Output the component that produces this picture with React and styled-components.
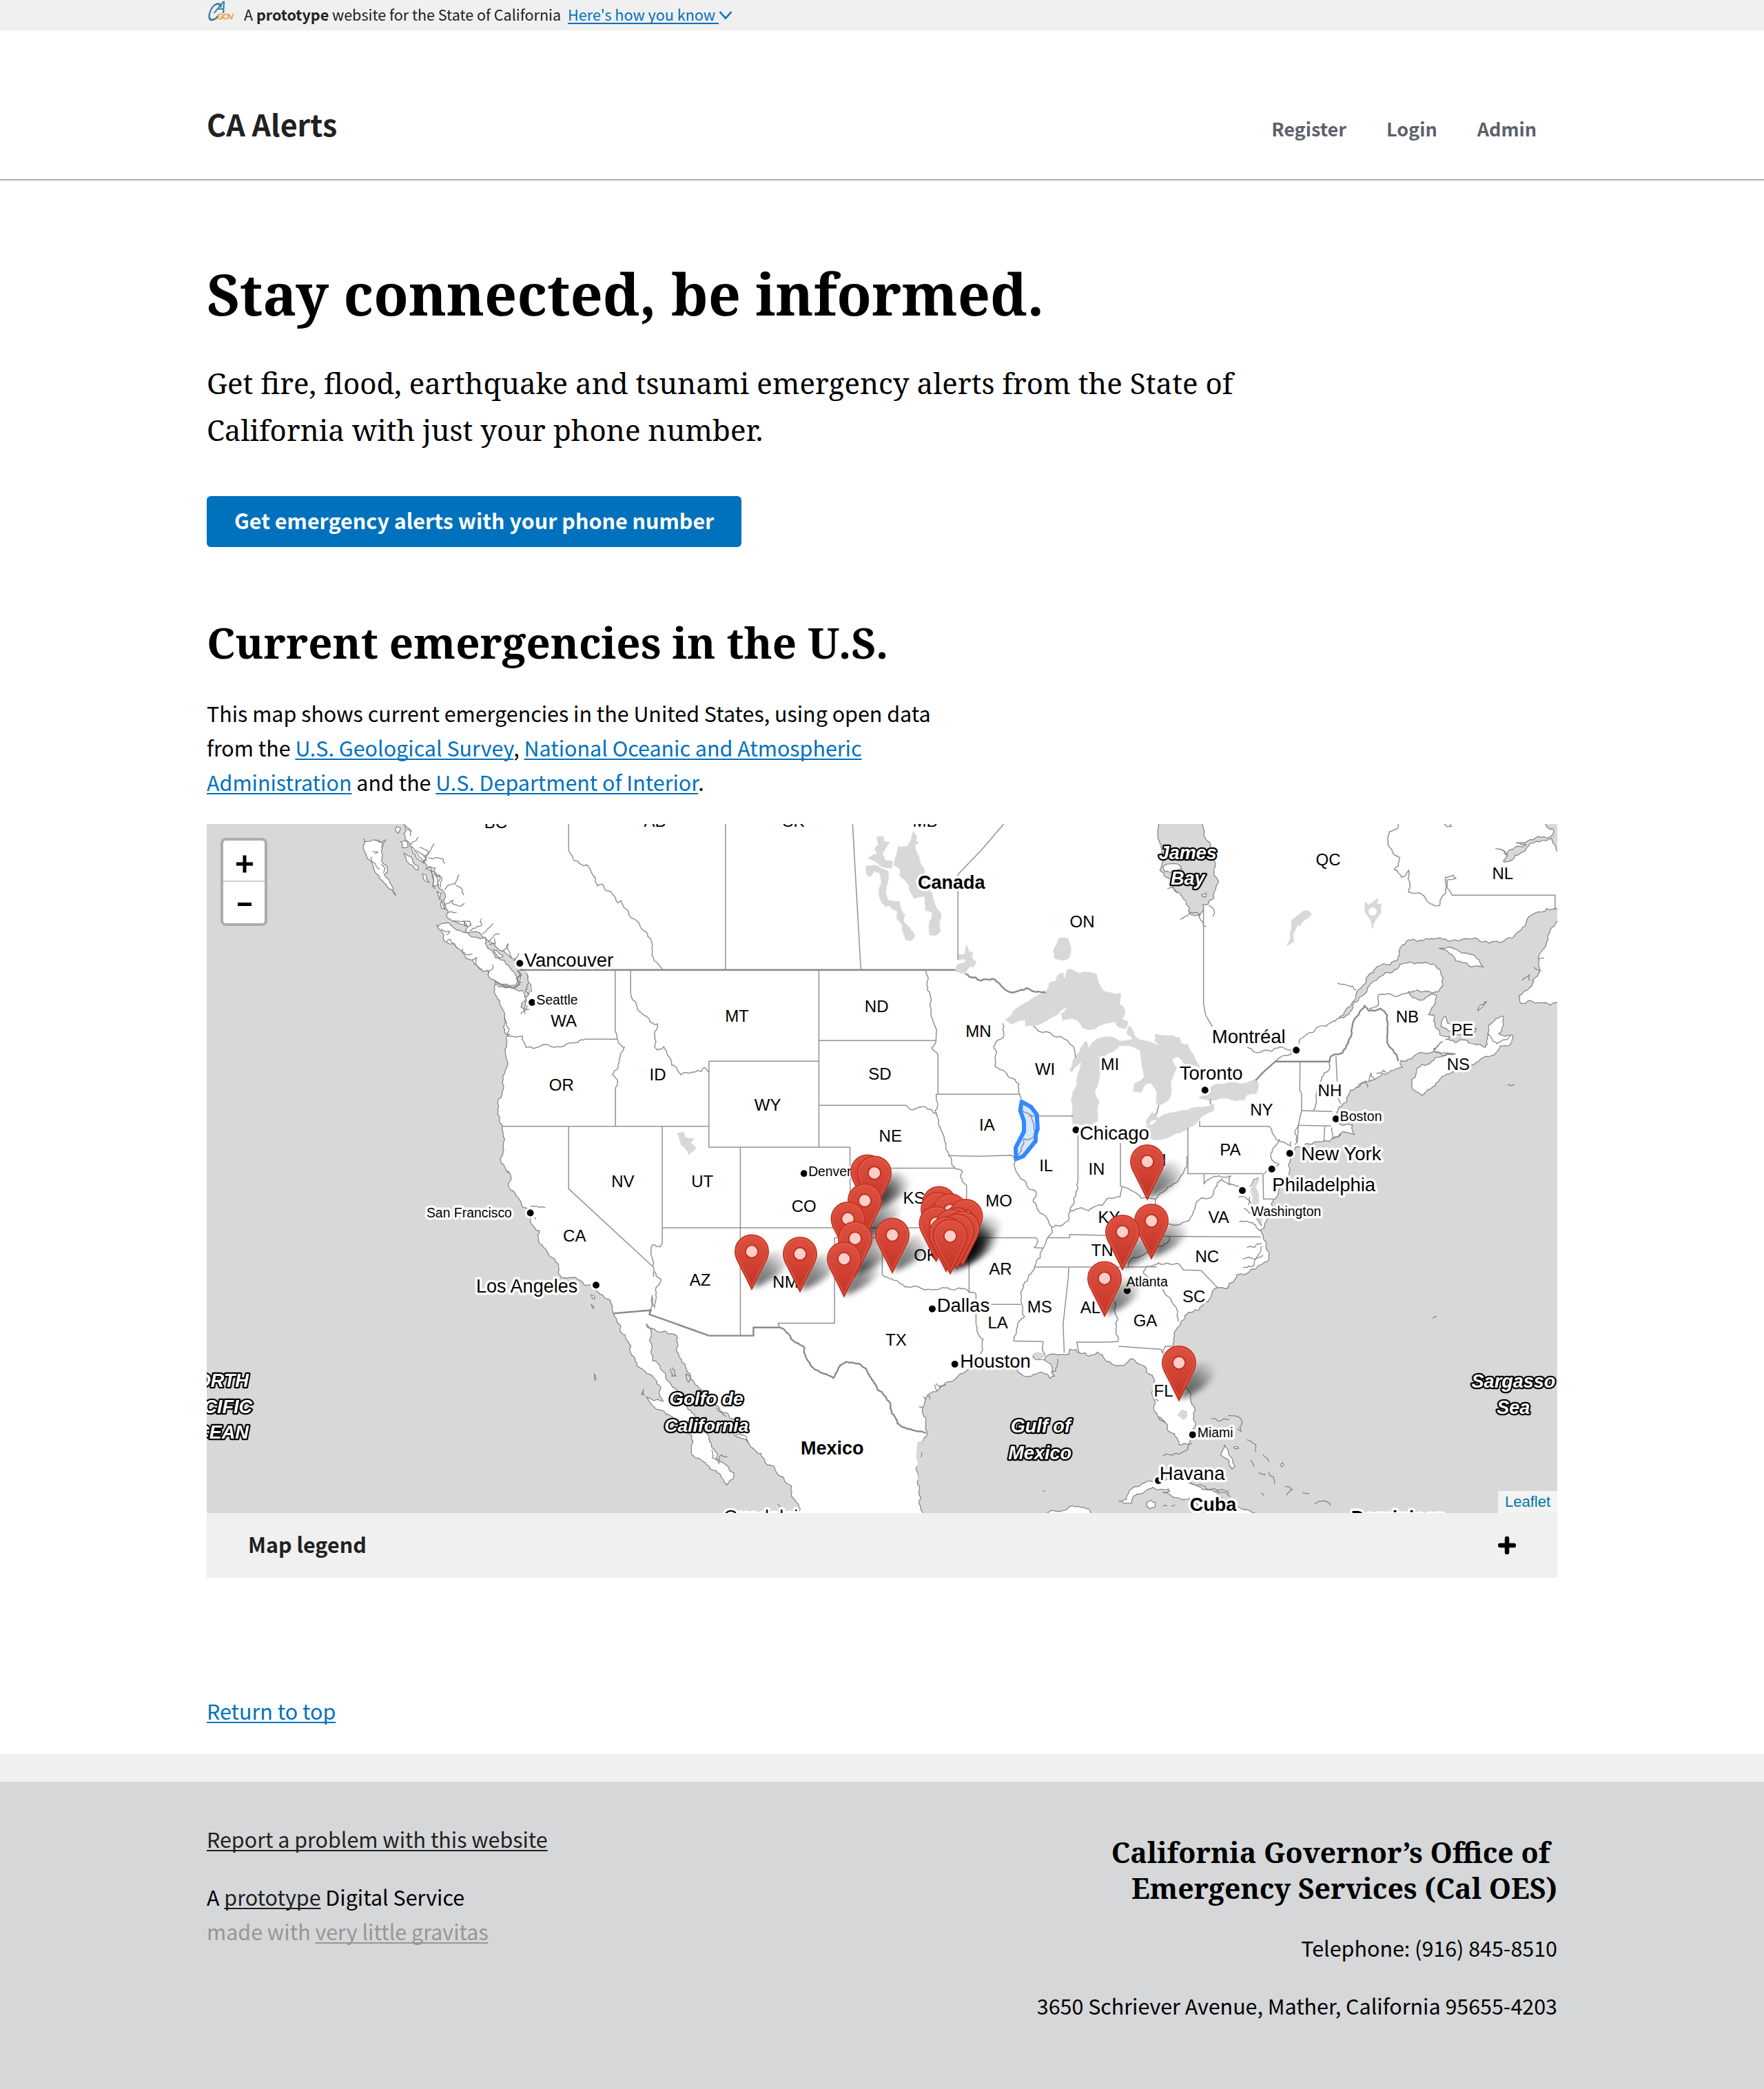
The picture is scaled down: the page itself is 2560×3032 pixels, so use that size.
import React from 'react';
import styled, { createGlobalStyle, css } from 'styled-components';

const sans = "'Noto Sans CJK SC', 'Noto Sans', sans-serif";
const serif = "'Noto Serif', 'DejaVu Serif Condensed', 'DejaVu Serif', serif";
const mapFont = "'Liberation Sans', Arial, sans-serif";

const GlobalStyle = createGlobalStyle`
  *, *::before, *::after { box-sizing: border-box; }
  body {
    margin: 0;
    background: #fff;
    color: #000;
    font-family: ${sans};
    font-size: 30.44px;
    line-height: 50px;
  }
  h1, h2, h3, p { margin: 0; }
`;

const Page = styled.div`
  display: flex;
  flex-direction: column;
  min-height: 3032px;
`;

const Container = styled.div`
  width: 1960px;
  margin: 0 auto;
`;

const Link = styled.a`
  color: ${(p) => p.$color || '#0071bc'};
  text-decoration: underline;
  text-decoration-thickness: 2px;
  text-underline-offset: 3px;
  text-decoration-skip-ink: none;
`;

/* ---------- banner ---------- */

const Banner = styled.div`
  height: 44px;
  background: #f0f0f0;
  color: #212121;
  font-size: 21.6px;
  line-height: 41px;
`;

const BannerRow = styled(Container)`
  display: flex;
  white-space: pre;
`;

const Logo = styled.svg`
  flex: none;
  width: 42px;
  height: 32px;
  margin-right: 12px;
`;

const BannerText = styled.span`
  letter-spacing: -0.03px;
`;

const BannerLink = styled(Link)`
  margin-left: 10px;
`;

const Chevron = styled.svg`
  width: 20px;
  height: 14px;
  margin-top: 15px;
`;

/* ---------- header ---------- */

const Header = styled.header`
  height: 218px;
  padding-top: 105px;
  border-bottom: 2px solid #aeb0b5;
`;

const HeaderRow = styled(Container)`
  display: flex;
  justify-content: space-between;
  align-items: baseline;
  padding-right: 30px;
`;

const SiteTitle = styled.div`
  color: #212121;
  font-size: 43px;
  font-weight: 700;
  line-height: 60px;
`;

const Nav = styled.nav`
  display: flex;
  gap: 58px;
`;

const NavLink = styled.a`
  color: #5b616b;
  font-size: 27px;
  font-weight: 700;
`;

/* ---------- main ---------- */

const Title = styled.h1`
  margin-top: 114px;
  font: 700 82.65px/100px ${serif};
`;

const Lead = styled.p`
  width: 1530px;
  margin-top: 46px;
  font: 400 42.1px/68px ${serif};
`;

const Button = styled.a`
  display: inline-block;
  height: 74px;
  margin-top: 62px;
  padding: 0 40px;
  border-radius: 6px;
  background: #0071bc;
  color: #fff;
  font-weight: 700;
  line-height: 70px;
  vertical-align: top;
`;

const SectionTitle = styled.h2`
  margin-top: 98px;
  font: 700 61.8px/80px ${serif};
`;

const Intro = styled.p`
  width: 1064px;
  margin-top: 38px;
`;

const MapFrame = styled.div`
  position: relative;
  height: 1000px;
  margin-top: 36px;
  overflow: hidden;
  background: #fff;
`;

const MapSvg = styled.svg`
  display: block;
  width: 1960px;
  height: 1000px;
`;

const ZoomControl = styled.div`
  position: absolute;
  top: 20px;
  left: 20px;
  display: flex;
  flex-direction: column;
  width: 68px;
  border: 4px solid rgba(0, 0, 0, 0.2);
  border-radius: 8px;
  background: #fff;
  background-clip: padding-box;
`;

const ZoomButton = styled.span`
  display: flex;
  align-items: center;
  justify-content: center;
  height: 60px;
  padding-top: ${(p) => (p.$divider ? 10 : 5)}px;
  padding-left: 1px;
  ${(p) => p.$divider && css`border-bottom: 2px solid #ccc;`}
`;

const Attribution = styled.div`
  position: absolute;
  right: 0;
  bottom: 0;
  height: 32px;
  padding: 0 10px;
  background: rgba(255, 255, 255, 0.7);
  color: #0078a8;
  font: 22px/32px ${mapFont};
`;

const LegendBar = styled.div`
  display: flex;
  justify-content: space-between;
  align-items: center;
  height: 94px;
  padding: 0 60px 4px;
  background: #f0f0f0;
  color: #212121;
  font-weight: 700;
  line-height: 90px;
`;

const PlusIcon = styled.svg`
  width: 26px;
  height: 26px;
  margin-top: 3px;
`;

const ReturnRow = styled(Container)`
  padding: 168px 0 38px;
`;

/* ---------- footer ---------- */

const Band = styled.div`
  height: 40px;
  background: #f0f0f0;
`;

const Footer = styled.footer`
  flex: 1;
  background: #d6d7d9;
`;

const FooterRow = styled(Container)`
  display: flex;
  justify-content: space-between;
  padding-top: 58px;
`;

const FooterLeft = styled.div`
  display: flex;
  flex-direction: column;
  gap: 34px;
`;

const FooterRight = styled.div`
  display: flex;
  flex-direction: column;
  gap: 34px;
  padding-top: 18px;
  text-align: right;
`;

const AgencyName = styled.h3`
  margin-bottom: 2px;
  font: 700 41px/52px ${serif};
`;

const Muted = styled.span`
  color: #969696;
`;

/* ---------- map geometry ---------- */

// Each sheet of the base map has its own origin and scale inside the 1960x1000 viewport.
const NW = [0, -6, 2.4123, 3];
const N = [650, -6, 2.4123, 3];
const NE = [1300, -6, 2.3403, 3];
const SW = [0, 504, 2.4123, 2.6133];
const S = [650, 444, 2.4123, 2.8];
const SE = [1300, 444, 2.3403, 2.3758];
const RAW = [0, 0, 1, 1];

const parse = ([ox, oy, sx, sy], text) =>
  text.trim().split(/\s+/).map((pair) => {
    const [x, y] = pair.split(',').map(Number);
    return [ox + x / sx, oy + y / sy];
  });

const joinParts = (parts) => parts.flatMap(([sheet, text]) => parse(sheet, text));

const noise = (x, y) => {
  const v = Math.sin(x * 12.9898 + y * 78.233) * 43758.5453;
  return (v - Math.floor(v)) * 2 - 1;
};

// Midpoint displacement gives shores and rivers their ragged edge.
const roughen = (pts, amount) => {
  let out = pts;
  for (let pass = 0; pass < 3; pass += 1) {
    const next = [out[0]];
    for (let i = 1; i < out.length; i += 1) {
      const [ax, ay] = out[i - 1];
      const [bx, by] = out[i];
      const len = Math.hypot(bx - ax, by - ay);
      if (len > 4) {
        const d = noise(ax + bx, ay + by) * Math.min(len, 26) * amount;
        next.push([(ax + bx) / 2 - ((by - ay) / len) * d, (ay + by) / 2 + ((bx - ax) / len) * d]);
      }
      next.push(out[i]);
    }
    out = next;
  }
  return out;
};

const toPath = (pts) => `M${pts.map(([x, y]) => `${x.toFixed(1)} ${y.toFixed(1)}`).join('L')}`;

const WATER = '#d8d8d8';

const Border = styled.path`
  fill: none;
  stroke: ${(p) => (p.$national ? '#8a8a8a' : '#929292')};
  stroke-width: ${(p) => (p.$national ? 2.4 : 1.5)};
`;

const Shore = styled.path`
  fill: none;
  stroke: #808080;
  stroke-width: 1.2;
`;

const Fill = styled.path`
  fill: ${(p) => (p.$water ? WATER : '#fff')};
`;

const Lake = styled.path`
  fill: ${WATER};
  stroke: ${WATER};
  stroke-width: 2;
  stroke-linejoin: round;
`;

const Sea = ({ parts, close, amount = 0.2 }) => {
  const pts = roughen(joinParts(parts), amount);
  return (
    <>
      <Fill $water d={`${toPath(pts)}${close}Z`} />
      <Shore d={toPath(pts)} />
    </>
  );
};

const Island = ({ at, pts, amount = 0.16 }) => {
  const p = parse(at, pts);
  const d = `${toPath(roughen([...p, p[0]], amount))}Z`;
  return (
    <>
      <Fill d={d} />
      <Shore d={d} />
    </>
  );
};

const pacific = [
  [NW, '690,18 697,40 690,60 705,95 712,112 730,150 750,180 765,190 775,215 795,235 805,265 815,300 830,312 835,340 833,370 845,400 840,420 860,440 890,455 915,465 905,485 935,488 960,500 975,512 990,530 1010,550 1040,570 1065,600 1090,612 1085,640 1110,655 1125,680 1130,710 1138,745 1120,770 1100,815 1112,825 1112,770 1108,745 1080,738 1040,728 1010,714 1008,740 1012,765 1025,785 1035,820 1042,860 1048,880 1043,925 1060,935 1050,945 1050,985 1048,1030 1044,1100 1038,1175 1030,1210 1018,1260 1026,1300 1035,1335 1037,1360 1043,1390 1040,1435 1028,1475 1030,1495 1045,1515 1055,1535'],
  [SW, '1055,0 1060,40 1065,72 1085,95 1100,115 1105,135 1120,140 1140,160 1133,185 1145,210 1165,225 1160,262 1175,280 1195,310 1215,330 1222,345 1232,355 1232,390 1240,402 1270,402 1300,412 1320,430 1345,432 1365,455 1385,468 1405,485 1417,505 1424,539 1435,565 1450,590 1450,610 1470,640 1485,665 1485,690 1500,715 1505,738 1530,755 1550,770'],
  [S, '0,1012 22,1045 20,1085 30,1102 12,1095 0,1100 -30,1085 -8,1120 25,1140 60,1165 100,1200 130,1240 128,1290 130,1320 155,1335 190,1365 215,1385 240,1420 252,1443 275,1420 278,1395 262,1385 255,1365 235,1350 215,1340 215,1310 200,1290 190,1245 170,1225 145,1185 130,1150 110,1110 90,1070 60,1040 40,1010 20,970 0,938'],
  [SW, '1562,720 1562,700 1560,665 1550,640 1555,600 1540,580'],
  [S, '0,810 30,820 50,830 80,845 78,885 92,930 112,975 125,1010 150,1040 180,1070 215,1120 250,1150 280,1180 275,1220 285,1245 330,1275 350,1300 385,1340 420,1370 450,1410 480,1450 487,1500 510,1540 512,1570'],
];

const atlantic = [
  [NE, '1560,395 1530,388 1490,402 1460,412 1440,445 1425,470 1410,490 1390,515 1340,528 1290,533 1240,518 1200,522 1150,515 1095,520 1040,522 1010,560 1000,612 950,628 920,665 895,690 880,730 860,765 845,805 825,830 800,865 825,855 850,820 870,780 900,730 940,685 1000,650 1060,628 1110,628 1145,650 1158,690 1155,725 1125,752 1070,740 1040,748 1085,785 1135,765 1130,800 1105,848 1125,850 1130,900 1145,935 1180,945 1165,958 1200,970 1260,975 1300,990 1310,930 1335,865 1360,855 1360,900 1345,930 1395,940 1390,965 1350,985 1325,1025 1270,1055 1200,1090 1165,1110 1130,1160 1085,1200 1055,1175 1050,1130 1070,1080 1130,1035 1195,1020 1130,1010 1125,995 1155,965 1110,1015 1050,1040 1012,1050 1018,1078 990,1090 950,1105 925,1130 900,1140 860,1165 835,1200 815,1240 800,1265 790,1285 800,1310 815,1330 850,1330 855,1370 830,1360 800,1380 790,1385 750,1400 700,1410 655,1425'],
  [SE, '655,65 640,80 635,130 615,180 598,210 580,240 575,270 550,330 532,345 555,400 558,455 520,480 490,495 455,500 430,530 425,545 392,545 360,590 330,620 280,640 265,665 250,690 240,740 250,780 270,840 285,890 300,930 313,970 315,1020 305,1065 290,1085 260,1085 255,1065 225,1040 215,1010 190,990 175,950 167,910 175,880 175,860 155,840 130,810 95,790 50,815 30,805 0,775'],
  [S, '1550,903 1490,908 1455,890 1450,912 1400,910 1365,935 1390,960 1400,1000 1385,1010 1350,985 1320,1000 1280,990 1270,975 1200,968 1100,970 1080,990 1050,1015 1000,1040 965,1070 945,1110 938,1150 950,1200 953,1240 935,1290 925,1350 920,1440 930,1500 945,1570'],
];

const inlets = [
  [NW, ['712,110 720,95 740,75', '762,188 785,130 797,103', '775,165 800,165 828,170 834,190', '697,40 718,50', '835,305 870,280 885,240', '872,287 893,300 900,328', '835,370 862,350 860,364 903,365', '845,405 875,402', '915,465 925,450', '920,482 962,460 962,430', '965,498 980,480 1002,450', '985,530 1005,505 1025,495', '1035,572 1055,540 1052,560 1068,600', '745,120 775,145 758,190 725,135', '775,200 800,210 803,245 822,250 818,295', '860,440 900,440 915,465', '1000,630 1000,650 985,675', '1120,665 1125,700 1115,745 1130,760', '1050,935 1050,885 1045,860', '820,475 850,485 840,500', '895,560 905,585 930,582', '1100,845 1115,830 1130,825', '600,85 615,100 612,120', '580,140 600,140 590,150', '690,20 705,35 715,70', '715,115 735,135 770,180', '765,215 785,205 790,245 800,300', '800,235 815,240 812,270', '905,465 900,440 918,440 925,462', '1008,515 1010,540 990,545', '1075,615 1085,600 1092,580', '1130,780 1110,830 1115,845', '840,530 852,520 870,545 880,560', '930,610 945,600 950,640 965,650', '575,160 590,190 605,215', '610,195 625,210 618,232']],
  [SW, ['1133,132 1160,135 1185,138', '1148,175 1153,182']],
  [NE, ['265,435 298,402 330,412 352,465', '360,372 378,390 375,420', '220,300 240,295 255,320', '798,710 830,720 862,740', '655,1415 660,1400 665,1330', '1130,1010 1170,1015 1200,1018', '1305,930 1340,975 1385,940', '780,1340 782,1385 810,1370', '640,1420 640,1400', '690,940 735,900 780,880 800,865', '668,975 690,940', '865,1165 890,1140 900,1165', '905,1140 912,1100 925,1130', '930,1105 955,1090 965,1100', '1480,605 1500,600', '1465,640 1490,655', '1425,700 1450,675 1450,700', '1375,1155 1398,1150']],
  [S, ['1325,918 1365,935', '1410,930 1410,960 1390,985', '980,1035 990,1060', '950,1095 940,1085', '925,1125 940,1130', '60,965 75,1000 60,1000 55,970', '110,990 125,1000 120,1025 112,1010 110,990', '200,1300 225,1355 235,1320 255,1330', '215,1130 250,1165', '430,1520 440,1532', '1358,1465 1366,1470', '985,1030 1000,1045 1020,1035', '955,1075 965,1095', '285,1240 310,1240 325,1270']],
  [SE, ['462,232 500,245 495,260', '480,270 540,330', '465,318 500,320 530,345', '490,405 540,390', '475,443 515,445 545,430', '478,475 515,465 540,400', '370,995 390,1003 430,998', '428,985 450,985 475,1010 470,1040 458,1030', '490,1068 520,1085 520,1110', '545,1118 565,1145', '530,1180 555,1190', '565,1180 585,1222', '620,1230 645,1240 625,1260', '680,1250 702,1255', '720,1290 745,1280 775,1295', '502,1140 515,1160', '205,1123 250,1115 290,1100 303,1080', '300,1215 360,1240 430,1255', '385,1245 410,1250 435,1265', '1122,650 1134,643', '540,1252 546,1262', '205,1298 220,1296', '235,1297 246,1292', '190,990 210,1010', '180,930 190,935', '500,195 515,170 530,165', '500,230 505,255 525,265']],
];

const stateLines = [
  [[NW, '1267,18 1267,128']],
  [[N, '248,18 248,651']],
  [[N, '693,18 722,651']],
  [[N, '1222,18 1145,130 1062,238 1062,610']],
  [[NW, '1430,653 1430,920']],
  [[NW, '1325,955 1438,955']],
  [[NW, '1431,1165 1431,1333']],
  [[NW, '1484,653 1484,755']],
  [[NW, '1035,1334'], [N, '190,1334']],
  [[NW, '1267,1334'], [SW, '1267,66 1560,360']],
  [[N, '27,1334'], [S, '27,460']],
  [[N, '190,1051 575,1051']],
  [[N, '190,1051 190,1425 684,1425']],
  [[N, '575,653 575,1425']],
  [[N, '684,1425'], [S, '685,398']],
  [[N, '300,1425'], [S, '300,836']],
  [[S, '27,398 1092,398']],
  [[S, '797,590 797,438 630,438 630,785 432,785 438,803']],
  [[N, '575,961 985,961']],
  [[N, '575,1243 880,1243']],
  [[N, '992,1020 992,1195']],
  [[N, '985,1195 1278,1195']],
  [[N, '1030,1462 1130,1465 1250,1460 1265,1480']],
  [[S, '685,155 1052,155']],
  [[S, '1092,225 1092,438 1101,440 1101,660']],
  [[S, '1092,438 1337,438']],
  [[S, '1125,666 1125,785']],
  [[S, '1125,709 1281,709']],
  [[S, '1257,858 1360,860']],
  [[S, '1328,478 1360,480']],
  [[S, '1482,0 1482,210']],
  [[S, '1375,438 1453,438 1453,425 1568,428'], [SE, '230,367 537,369']],
  [[S, '1330,557 1568,557'], [SE, '185,472']],
  [[S, '1450,557 1448,600 1430,790 1434,905']],
  [[S, '1485,905 1478,862 1568,862'], [SE, '52,730']],
  [[SE, '55,746 200,757']],
  [[SE, '260,462 275,483 335,485 392,545']],
  [[N, '1310,1289 1465,1289']],
  [[SE, '61,45 61,195']],
  [[NE, '290,1340'], [SE, '290,151 545,151 547,238 580,238']],
  [[SE, '345,151 345,187']],
  [[NE, '330,1310 330,1334 565,1334']],
  [[NE, '671,1052 670,1180']],
  [[NE, '676,1190 676,1265']],
  [[NE, '676,1266 780,1270']],
  [[NE, '676,1265 665,1330 775,1333']],
  [[NE, '755,1333 752,1400']],
  [[NE, '665,1330 662,1405']],
  [[NE, '793,1030 797,1140']],
  [[NE, '343,385 343,800 350,850 373,900']],
  [[NE, '1187,328 1537,328 1537,393']],
];

const riverLines = [
  [[NW, '1267,128 1275,150 1285,175 1300,180 1318,200 1330,195 1345,225 1360,250 1368,288 1385,280 1395,305 1415,312 1440,360 1450,352 1470,390 1480,415 1505,440 1520,470 1540,490 1555,520 1560,570 1566,612'], [N, '27,650']],
  [[NW, '1050,938 1105,942 1117,990 1145,996 1170,983 1215,990 1270,972 1325,955']],
  [[NW, '1430,920 1438,955 1462,990 1445,1050 1420,1110 1437,1130 1431,1165']],
  [[NW, '1484,755 1500,790 1505,810 1540,855 1568,890'], [N, '10,888 2,920 5,965 0,990 10,1003 32,988 45,1025 60,1068 78,1080 92,1110 105,1100 165,1095 173,1078 190,1100']],
  [[S, '27,460 20,475 0,468'], [SW, '1560,280 1556,290 1560,330 1562,360 1566,400']],
  [[S, '0,575 22,608 5,640 0,720'], [SW, '1560,470 1558,480 1560,503 1550,540']],
  [[N, '880,1243 905,1262 950,1253 975,1275 990,1285']],
  [[N, '950,655 955,740 968,790 975,880 985,930 985,961 970,992 992,1020']],
  [[N, '985,1195 990,1230 982,1265 995,1310 1010,1370 1020,1410 1030,1462 1040,1500'], [S, '1052,155 1078,170 1070,190 1092,225']],
  [[S, '797,590 830,605 860,625 900,638 945,650 1000,645 1050,650 1065,642 1101,660 1125,666']],
  [[S, '1125,785 1150,850 1140,910']],
  [[N, '1220,885 1220,948 1195,965 1187,988 1197,1010 1193,1075 1225,1095 1240,1120 1275,1150 1278,1195 1283,1225 1287,1265 1310,1280 1325,1315 1330,1380 1292,1390 1285,1440 1265,1480'], [S, '1265,120 1263,160 1280,195 1310,240 1335,250 1325,290 1345,330 1375,360 1390,395 1393,415 1375,440 1360,480 1350,520 1330,555 1310,590 1290,630 1282,665 1285,710 1295,760 1270,790 1257,858']],
  [[S, '1360,860 1358,890 1367,915']],
  [[S, '1337,438 1342,455 1328,478']],
  [[S, '1390,395 1420,390 1448,370 1455,330 1480,320 1520,328'], [SE, '0,260 20,235 60,230 65,195 100,210 130,235 180,240 205,215 240,185 275,150 285,90']],
  [[S, '1482,210 1475,260 1455,330']],
  [[SE, '52,730 45,700 52,650 40,590']],
  [[SE, '200,757 205,770 213,745 238,745']],
  [[SE, '260,462 190,458 150,470 138,490 160,510 210,560 240,600 258,660']],
  [[SE, '88,472 90,455 130,435 190,400 220,390 230,367']],
  [[SE, '225,325 270,320 300,300 335,235 365,235 405,170 435,190']],
  [[SE, '180,240 175,290 225,325']],
  [[SE, '345,187 380,160 435,160 430,185 465,195']],
  [[N, '1325,900 1345,920 1445,960 1465,985 1475,1035']],
  [[NE, '492,990 540,1010 600,990 640,1005 640,1020 587,1052']],
  [[NE, '565,1334 580,1370 640,1420']],
  [[NE, '600,1390 580,1430 575,1480 600,1500']],
  [[SE, '600,120 575,135 550,152']],
  [[NE, '905,825 937,805 937,762 975,757 990,768 1040,750']],
  [[NE, '772,1052 768,1090 745,1120 740,1160 725,1200 715,1265']],
  [[NE, '670,1180 676,1190']],
  [[NE, '797,1200 810,1235']],
  [[NE, '1005,18 1000,40 975,50 970,90 985,140 1010,165 1005,200 990,215 1015,250 1040,220 1045,290 1040,315 1080,320 1100,350 1145,373 1155,330 1165,250 1190,240 1200,255 1170,262 1170,285 1187,328']],
  [[NE, '1160,20 1170,30 1185,28 1180,18']],
  [[NE, '190,1245 187,1270 178,1285']],
  [[NE, '367,1215 368,1240']],
];

const nationalLines = [
  { parts: [[NW, '1095,653'], [N, '1053,653']], amount: 0 },
  { parts: [[NW, '1008,703 1040,722 1075,733 1095,715 1085,690 1100,675 1088,655']], amount: 0 },
  { parts: [[SW, '1424,539 1555,527 1550,543'], [S, '0,757 190,836 346,836 346,803 438,803']], amount: 0 },
  { parts: [[S, '438,803 470,830 525,885 545,955 580,985 625,1008 650,955 670,943 715,950 740,970 765,1020 780,1055 825,1110 830,1150 850,1193 895,1215 950,1232']], amount: 0.12 },
  { parts: [[N, '1087,670 1105,685 1140,700 1185,692 1215,725 1260,750 1300,733 1340,748 1370,753']], amount: 0.15 },
  { parts: [[NE, '520,1135 545,1100 587,1052 772,1052']], amount: 0 },
  { parts: [[NE, '772,1052 775,1030 815,1015 835,970 850,885 890,810 905,832 945,822 967,850 967,970 985,1000 1005,1050']], amount: 0.12 },
];

const lakes = [
  // Superior
  [[N, '1230,870 1260,830 1295,800 1370,750 1385,710 1405,705 1415,675 1430,668 1435,700 1445,655 1455,650 1490,670 1545,672'], [NE, '-15,710 0,745 60,757 55,800 75,830 65,870 85,880 80,905 55,900 45,880 0,888'], [N, '1568,890 1545,905 1520,912 1500,905 1480,870 1450,865 1430,870 1425,845 1450,815 1430,820 1410,845 1370,875 1330,895 1300,895 1297,868 1250,887']],
  // Michigan
  [[N, '1510,965 1475,1030 1455,1090 1460,1095 1485,1060 1500,1035 1480,1150 1460,1220 1465,1320 1500,1328 1530,1325 1550,1310 1555,1230 1540,1180 1560,1080'], [NE, '0,1070 10,1020 55,985 60,965 20,945 0,950'], [N, '1550,955 1535,970 1520,1000']],
  // Huron
  [[NE, '60,965 60,982 100,985 130,1000 135,1060 145,1120 110,1150 105,1180 130,1185 150,1145 165,1145 185,1180 190,1245 225,1215 230,1140 250,1080 235,1040 260,1030 280,1065 330,1075 310,1030 290,980 265,975 262,950 210,940 180,935 180,965 210,985 150,965 110,945 105,925 90,900 85,930 110,950 85,962']],
  // St. Clair, Erie, Ontario
  [[NE, '170,1275 190,1300 165,1308 155,1330 150,1310']],
  [[NE, '145,1340 175,1325 220,1280 290,1265 350,1250 378,1240 375,1265 320,1315 265,1360 200,1390 165,1385 155,1350']],
  [[NE, '330,1210 370,1185 370,1163 420,1150 480,1150 520,1130 528,1150 522,1190 490,1195 480,1217 430,1212 370,1220']],
  // Manitoba
  [[N, '780,75 800,75 800,95 820,100 800,140 795,150 805,180 832,182 830,208 795,202 780,185 750,165 783,150 772,125 785,110']],
  [[N, '740,205 775,200 815,225 815,270 808,310 815,350 855,355 865,400 875,415 870,445 905,490 910,505 895,525 880,520 870,460 850,430 853,400 825,372 808,375 790,340 787,300 795,275 790,230 765,220 755,245 745,240']],
  [[N, '855,118 890,118 915,140 925,170 943,215 945,290 970,320 980,370 1002,410 995,470 1000,482 985,500 965,500 965,440 975,400 948,390 945,330 920,335 910,340 890,280 860,240 860,215 838,195 848,150']],
  [[N, '905,55 915,70 912,95 922,98 908,110 918,150 900,125 888,110 900,85']],
  [[N, '1092,548 1100,575 1112,580 1110,600 1125,620 1115,640 1105,635 1085,665 1055,660 1062,630 1085,625 1090,605 1065,608 1062,588 1088,585']],
  // Nipigon
  [[N, '1415,520 1430,515 1448,520 1455,550 1450,600 1430,610 1400,600 1397,570 1408,545']],
  // Québec
  [[NE, '685,397 697,397 708,410 670,460 665,440 645,500 648,530 628,545 642,480 642,440']],
  [[NE, '893,360 900,375 915,365 935,345 932,370 945,367 945,400 925,435 918,470 912,435 893,400']],
  // Great Salt Lake, Okeechobee, Laguna Madre, Pontchartrain
  [[N, '82,1365 100,1362 105,1385 135,1390 122,1405 143,1430 120,1455 95,1415']],
  [[SE, '258,983 272,966 285,972 286,986 274,997']],
  [[S, '922,1270 938,1265 928,1330 924,1420 918,1330']],
  [[S, '1325,912 1345,905 1365,918 1345,930 1325,922']],
  // Chesapeake Bay
  [[SE, '530,170 515,180 505,205 512,240 520,280 530,310 540,330 535,290 525,260 528,220 518,200']],
  // Puget Sound
  [[NW, '1100,650 1115,660 1125,700 1135,740 1120,755 1110,745 1105,700']],
];

const islands = [
  [NW, '550,80 555,95 590,88 605,98 628,85 615,120 612,180 630,200 632,230 622,238 650,290 662,330 640,300 615,265 600,240 585,215 580,190 560,160 548,120'],
  [NW, '805,460 825,450 850,450 870,475 905,490 975,512 985,560 1010,600 1060,640 1080,670 1090,700 1080,720 1050,715 1010,700 985,675 985,655 970,660 950,640 930,610 910,605 900,585 880,560 865,540 835,530 830,500'],
  [NW, '690,145 715,160 740,200 740,220 722,200 700,180'],
  [NW, '755,235 768,240 778,272 760,260'],
  [NW, '680,95 700,92 705,118 685,122'],
  [NW, '788,220 806,240 810,280 790,290'],
  [NW, '805,310 822,320 815,345'],
  [NW, '822,345 835,390 822,385'],
  [NW, '665,28 678,35 672,58 660,45'],
  [NW, '1095,672 1108,682 1108,705 1097,705'],
  [NW, '1005,565 1038,592 1025,600'],
  [SW, '1345,470 1358,475 1358,484 1350,482'],
  [SW, '1345,505 1356,517 1352,520'],
  [SW, '1358,770 1362,782 1360,793'],
  [SW, '1530,825 1532,850 1522,845'],
  [NE, '205,205 220,192 255,192 270,215 250,225 210,222'],
  [NE, '337,325 352,318 352,335 340,335'],
  [NE, '1145,560 1170,555 1230,580 1280,610 1293,640 1250,640 1200,615 1190,590'],
  [NE, '1165,855 1172,885 1200,905 1270,908 1265,925 1230,930 1170,912 1150,900'],
  [NE, '1560,440 1545,440 1520,480 1500,560 1480,600 1485,650 1460,700 1465,705 1415,765 1422,800 1480,795 1560,797'],
  [NE, '1305,790 1298,795 1280,825 1275,830 1282,810'],
  [SE, '80,1275 90,1245 130,1225 190,1212 290,1212 340,1240 400,1262 440,1280 470,1305 520,1322 520,1340 380,1340 330,1300 295,1270 250,1268 205,1250 228,1247 225,1238 195,1240 170,1232 130,1255 105,1262 100,1285 55,1280'],
  [SE, '150,1285 165,1278 180,1285 178,1300 160,1306 150,1298'],
  [SE, '415,1087 425,1100 438,1130 450,1160 440,1170 425,1135 402,1122'],
  [SE, '446,1095 460,1092 462,1098 450,1100'],
  [SE, '606,1152 612,1148 614,1158 608,1162'],
  [S, '1340,1570 1400,1548 1450,1532 1500,1535 1520,1540 1530,1570'],
];

const labels = [
  [NW, 'BC', 975, 36, 24], [RAW, 'AB', 636, 4, 24], [RAW, 'SK', 837, 4, 24], [RAW, 'MB', 1026, 4, 24],
  [NW, 'Vancouver', 1115, 638, 27.5], [NW, 'Seattle', 1158, 805, 19.3], [NW, 'WA', 1208, 900, 24], [NW, 'OR', 1202, 1178, 24],
  [SW, 'San Francisco', 773, 175, 19.4], [SW, 'NV', 1420, 60, 24], [SW, 'CA', 1251, 266, 24], [SW, 'Los Angeles', 947, 460, 27],
  [RAW, 'ID', 644, 372, 24],
  [N, 'ON', 1457, 468, 24], [N, 'MT', 250, 878, 24], [N, 'ND', 739, 837, 24], [N, 'MN', 1092, 945, 24], [N, 'SD', 752, 1130, 24],
  [N, 'WY', 353, 1267, 24], [N, 'NE', 789, 1402, 24], [N, 'IA', 1140, 1352, 24], [N, 'WI', 1335, 1110, 24], [N, 'IL', 1350, 1530, 24], [N, 'IN', 1522, 1545, 24],
  [S, 'UT', 132, 232, 24], [S, 'CO', 483, 333, 24], [S, 'Denver', 542, 187, 19.3], [S, 'KS', 873, 300, 24], [S, 'MO', 1162, 310, 24],
  [S, 'OK', 911, 533, 24], [S, 'AR', 1174, 587, 24], [S, 'AZ', 126, 633, 24], [S, 'NM', 417, 640, 24], [S, 'TX', 812, 875, 24],
  [S, 'LA', 1170, 805, 24], [S, 'MS', 1308, 743, 24], [S, 'AL', 1494, 745, 24], [S, 'Dallas', 992, 740, 27.5], [S, 'Houston', 1073, 965, 27.5],
  [S, 'TN', 1532, 512, 24], [S, 'KY', 1556, 378, 24], [S, 'Guadalajara', 245, 1598, 27],
  [N, 'Chicago', 1492, 1393, 27.5],
  [NE, 'QC', 728, 198, 24], [NE, 'NL', 1327, 257, 24], [RAW, 'MI', 1299, 357, 24], [NE, 'NB', 1000, 882, 24], [NE, 'PE', 1188, 940, 24],
  [NE, 'NS', 1173, 1088, 24], [NE, 'NH', 735, 1203, 24], [NE, 'NY', 505, 1286, 24], [NE, 'PA', 402, 1461, 24],
  [NE, 'Montréal', 375, 973, 27.5], [NE, 'Toronto', 265, 1132, 27.5], [NE, 'Boston', 810, 1310, 19.6], [NE, 'New York', 678, 1483, 27.5],
  [SE, 'Philadelphia', 580, 212, 27.5], [SE, 'Washington', 508, 298, 19.4], [RAW, 'OH', 1358, 495.5, 24], [SE, 'VA', 363, 321, 24],
  [SE, 'NC', 318, 457, 24], [SE, 'SC', 275, 593, 24], [SE, 'GA', 108, 677, 24], [SE, 'FL', 178, 920, 24],
  [SE, 'Atlanta', 84, 540, 19.4], [SE, 'Miami', 326, 1060, 19.4], [SE, 'Havana', 197, 1206, 27.5],
  [N, 'Canada', 925, 300, 27, 'country'], [S, 'Mexico', 515, 1320, 27, 'country'], [SE, 'Cuba', 300, 1314, 27, 'country'], [SE, 'Dominican', 848, 1360, 27, 'country'],
  [NE, 'James', 195, 170, 27, 'sea'], [NE, 'Bay', 235, 283, 27, 'sea'],
  [S, 'Golfo de', 55, 1118, 26.5, 'sea'], [S, 'California', 38, 1225, 26.5, 'sea'],
  [S, 'Gulf of', 1250, 1230, 27, 'sea'], [S, 'Mexico', 1242, 1337, 27, 'sea'],
  [SE, 'Sargasso', 1257, 888, 27, 'sea'], [SE, 'Sea', 1343, 980, 27, 'sea'],
  [SW, 'NORTH', 150, 818, 27, 'sea', 'end'], [SW, 'PACIFIC', 163, 917, 27, 'sea', 'end'], [SW, 'OCEAN', 150, 1015, 27, 'sea', 'end'],
];

const cities = [
  [NW, '1096,625 1139,795'], [SW, '1133,158 1363,432'], [S, '523,177 972,727 1051,952'], [N, '1475,1350'],
  [NE, '658,1003 348,1177 793,1302 636,1452'], [SE, '575,135 475,209 84,554 306,1051 190,1209'],
];

const labelKinds = {
  place: css`
    fill: #000;
    stroke: #fff;
    stroke-width: 7px;
  `,
  country: css`
    fill: #000;
    stroke: #fff;
    stroke-width: 7px;
    font-weight: 700;
  `,
  sea: css`
    fill: #fff;
    stroke: #000;
    stroke-width: 4.6px;
    font-weight: 700;
    font-style: italic;
  `,
};

const MapLabel = styled.text`
  font-family: ${mapFont};
  paint-order: stroke;
  stroke-linejoin: round;
  ${(p) => labelKinds[p.$kind]}
`;

const CityDot = styled.circle`
  fill: #000;
  stroke: #fff;
  stroke-width: 6px;
  paint-order: stroke;
`;

const FloodArea = styled.path`
  fill: rgba(51, 136, 255, 0.2);
  stroke: #3388ff;
  stroke-width: 6px;
  stroke-linejoin: round;
`;

// Marker tips, north to south so the southern pins overlap the northern ones.
const pins = [
  [959, 559.5], [969, 561.5], [955, 601.5], [1063, 605.5], [1061, 614], [1079, 616], [1101.5, 624], [930.5, 628],
  [1058.5, 634.5], [1088, 636], [1082, 638.5], [1097, 641.5], [1089, 645.5], [1073, 649.5],
  [995, 651.5], [1079, 653], [941, 656.5],
  [791, 675.5], [861, 679], [925, 686],
  [1365, 545], [1371, 631], [1329, 647], [1303, 714.5], [1411, 837],
];

const Pin = ({ x, y }) => (
  <g transform={`translate(${x - 25} ${y - 80})`}>
    <path d="M25 80L6 42C2 35 .7 31 .7 25A24.3 24.3 0 0 1 49.3 25C49.3 31 48 35 44 42Z" fill="url(#pin)" stroke="#c5301f" strokeWidth="1.4" />
    <path d="M25 75L8 41.500C4 34 2.800 30 2.800 25A22.200 22.200 0 0 1 47.200 25C47.200 30 46 34 42 41.500Z" fill="none" stroke="#e2604f" strokeWidth="1.3" strokeOpacity=".75" />
    <circle cx="25" cy="25" r="9.200" fill="#ffcec8" stroke="#c0301f" strokeWidth="2" />
  </g>
);

const EmergencyMap = () => (
  <MapSvg viewBox="0 0 1960 1000" aria-label="Map of current emergencies">
    <defs>
      <linearGradient id="pin" x1="0" y1="0" x2="0" y2="1">
        <stop offset="0" stopColor="#de5141" />
        <stop offset="1" stopColor="#c33325" />
      </linearGradient>
      <linearGradient id="shade" x1="0" y1="1" x2="1" y2="0">
        <stop offset="0" stopColor="#000" stopOpacity=".65" />
        <stop offset="0.5" stopColor="#000" stopOpacity=".42" />
        <stop offset="0.85" stopColor="#000" stopOpacity=".08" />
        <stop offset="1" stopColor="#000" stopOpacity="0" />
      </linearGradient>
      <filter id="soft" x="-40%" y="-40%" width="180%" height="180%">
        <feGaussianBlur stdDeviation="4" />
      </filter>
      <path id="shadow" d="M1 -2C6 -22 14 -44 30 -54C44 -60 56 -50 50 -36C42 -20 20 -8 1 -2Z" fill="url(#shade)" filter="url(#soft)" />
    </defs>

    <Sea parts={pacific} close="L0 1010L0 -10L286 -10" />
    <Sea parts={atlantic} close="L1970 1010L1970 120" />
    <Sea parts={[[NE, '195,10 188,60 200,110 205,150 195,220 215,250 245,310 285,370 295,405 330,418 340,370 360,365 378,340 395,270 380,210 370,150 365,100 345,60 335,10']]} close="" />
    <Sea parts={[[NE, '1495,10 1530,40 1530,60 1480,72 1405,100 1440,108 1385,130 1375,155 1335,125 1375,158 1362,182 1400,155 1435,135 1450,105 1490,90 1525,80 1540,120 1560,150']]} close="L1970 -10" />

    {islands.map(([at, pts]) => <Island key={pts} at={at} pts={pts} />)}
    {lakes.map((parts, i) => <Lake key={i} d={`${toPath(roughen(joinParts(parts), 0.1))}Z`} />)}
    <circle cx="1692" cy="127" r="6" fill="#fff" />
    {inlets.flatMap(([at, list]) => list.map((pts) => <Shore key={pts} d={toPath(roughen(parse(at, pts), 0.22))} />))}

    {stateLines.map((parts, i) => <Border key={i} d={toPath(joinParts(parts))} />)}
    {riverLines.map((parts, i) => <Border key={i} d={toPath(roughen(joinParts(parts), 0.16))} />)}
    {nationalLines.map(({ parts, amount }, i) => <Border key={i} $national d={toPath(roughen(joinParts(parts), amount))} />)}

    {cities.flatMap(([at, pts]) => parse(at, pts).map(([x, y]) => <CityDot key={`${x},${y}`} cx={x} cy={y} r="5" />))}
    {labels.map(([at, text, lx, ly, size, kind = 'place', anchor = 'start']) => {
      const [[x, y]] = parse(at, `${lx},${ly}`);
      return <MapLabel key={`${text}${lx}`} x={x - 1.5} y={y} fontSize={size} $kind={kind} textAnchor={anchor}>{text}</MapLabel>;
    })}

    <FloodArea d={`${toPath(parse(N, '1285,1227 1318,1250 1338,1283 1341,1345 1334,1370 1334,1398 1290,1465 1265,1477 1264,1427 1293,1357 1293,1312 1280,1265'))}Z`} />
    {pins.map(([x, y]) => <use key={`s${x},${y}`} href="#shadow" x={x} y={y} />)}
    {pins.map(([x, y]) => <Pin key={`${x},${y}`} x={x} y={y} />)}
  </MapSvg>
);

const CaGovLogo = () => (
  <Logo viewBox="0 0 42 32">
    <text transform="translate(-1 29.500) skewX(-14) scale(.66 1)" fontFamily={mapFont} fontStyle="italic" fontSize="37" fill="#2f7fa5">C</text>
    <text transform="translate(10.500 18.500) skewX(-14) scale(.95 1)" fontFamily={mapFont} fontStyle="italic" fontSize="25" fill="#2f7fa5">A</text>
    <text x="13" y="28" fontFamily={mapFont} fontSize="11.500" letterSpacing="-.8" fill="#f3952f" stroke="#f3952f" strokeWidth=".5">.GOV</text>
  </Logo>
);

export default function App() {
  return (
    <Page>
      <GlobalStyle />
      <Banner>
        <BannerRow>
          <CaGovLogo />
          <BannerText>A <b>prototype</b> website for the State of California</BannerText>
          <BannerLink>Here's how you know </BannerLink>
          <Chevron viewBox="0 0 20 14">
            <path d="M1.500 2L10 11.500L18.500 2" fill="none" stroke="#0071bc" strokeWidth="2.600" />
          </Chevron>
        </BannerRow>
      </Banner>

      <Header>
        <HeaderRow>
          <SiteTitle>CA Alerts</SiteTitle>
          <Nav>
            <NavLink>Register</NavLink>
            <NavLink>Login</NavLink>
            <NavLink>Admin</NavLink>
          </Nav>
        </HeaderRow>
      </Header>

      <Container as="main">
        <Title>Stay connected, be informed.</Title>
        <Lead>Get fire, flood, earthquake and tsunami emergency alerts from the State of California with just your phone number.</Lead>
        <Button>Get emergency alerts with your phone number</Button>

        <SectionTitle>Current emergencies in the U.S.</SectionTitle>
        <Intro>
          This map shows current emergencies in the United States, using open data from the{' '}
          <Link>U.S. Geological Survey</Link>, <Link>National Oceanic and Atmospheric Administration</Link> and the{' '}
          <Link>U.S. Department of Interior</Link>.
        </Intro>

        <MapFrame>
          <EmergencyMap />
          <ZoomControl>
            <ZoomButton $divider>
              <svg width="26" height="26" viewBox="0 0 26 26"><path d="M13 .5V25.500M1 13H25" stroke="#000" strokeWidth="5" /></svg>
            </ZoomButton>
            <ZoomButton>
              <svg width="20" height="5" viewBox="0 0 20 5"><path d="M0 2.500H20" stroke="#000" strokeWidth="5" /></svg>
            </ZoomButton>
          </ZoomControl>
          <Attribution>Leaflet</Attribution>
        </MapFrame>
        <LegendBar>
          <span>Map legend</span>
          <PlusIcon viewBox="0 0 26 26">
            <path d="M13 3V23M3 13H23" stroke="#000" strokeWidth="6.500" strokeLinecap="round" />
            <path d="M13 1V25M1 13H25" stroke="#000" strokeWidth="5" />
          </PlusIcon>
        </LegendBar>
      </Container>

      <ReturnRow>
        <Link>Return to top</Link>
      </ReturnRow>

      <Band />
      <Footer>
        <FooterRow>
          <FooterLeft>
            <p><Link $color="#212121">Report a problem with this website</Link></p>
            <p>
              A <Link $color="#212121">prototype</Link> Digital Service<br />
              <Muted>made with <Link $color="#969696">very little gravitas</Link></Muted>
            </p>
          </FooterLeft>
          <FooterRight>
            <AgencyName>California Governor’s Office of{'\u00a0'}<br />Emergency Services (Cal OES)</AgencyName>
            <p>Telephone: (916) 845-8510</p>
            <p>3650 Schriever Avenue, Mather, California 95655-4203</p>
          </FooterRight>
        </FooterRow>
      </Footer>
    </Page>
  );
}
